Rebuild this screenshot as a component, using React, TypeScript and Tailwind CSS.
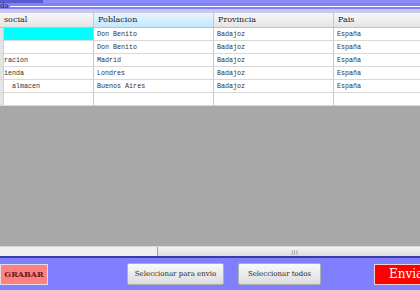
import React from "react";

const rows = [
  ["", "Don Benito", "Badajoz", "España"],
  ["", "Don Benito", "Badajoz", "España"],
  ["racion", "Madrid", "Badajoz", "España"],
  ["ienda", "Londres", "Badajoz", "España"],
  ["  almacen", "Buenos Aires", "Badajoz", "España"],
  ["", "", "", ""],
];

export default function App() {
  const mono = { fontFamily: '"Liberation Mono", "DejaVu Sans Mono", monospace' };
  const serif = { fontFamily: '"DejaVu Serif", "Liberation Serif", serif' };
  return (
    <div className="w-[420px] h-[290px] overflow-hidden bg-[#8080ff] flex flex-col">
      {/* titled border */}
      <div className="h-[13px] flex flex-col bg-[#8080ff]">
        <div className="flex h-[3px]">
          <div className="w-[43px] bg-[#5a5acf]" />
          <div className="flex-1 bg-[#8a8af8]" />
        </div>
        <div className="flex items-center h-[6px]">
          <span className="text-[7px] leading-none text-[#222]" style={serif}>da</span>
          <div className="flex-1 h-px bg-white ml-[1px]" />
        </div>
        <div className="h-[4px] bg-[#c8c8f0]" />
      </div>
      <div className="flex-1 flex flex-col bg-[#a8a8a8]">
        {/* table */}
        <div className="flex flex-col bg-white">
          <div className="flex h-[15px] border-b border-[#c0c0c0] bg-gradient-to-b from-[#f8f8f8] to-[#e4e4e4] text-[8px] text-[#222]" style={serif}>
            <div className="w-[94px] shrink-0 border-r border-[#c8c8c8] pl-[4px] flex items-center">social</div>
            <div className="w-[120px] shrink-0 border-r border-[#c8c8c8] pl-[4px] flex items-center bg-gradient-to-b from-[#e8f6fd] to-[#c4e8fb]">Poblacion</div>
            <div className="w-[120px] shrink-0 border-r border-[#c8c8c8] pl-[4px] flex items-center">Provincia</div>
            <div className="flex-1 pl-[4px] flex items-center">Pais</div>
          </div>
          {rows.map((r, i) => (
            <div key={i} className="flex h-[13px] border-b border-[#d8d8d8] text-[6.7px] text-[#333]" style={mono}>
              <div className="w-[4px] shrink-0 bg-[#e4e4e4] border-r border-[#d0d0d0]" />
              <div className={`w-[90px] shrink-0 border-r border-[#c8c8c8] flex items-center whitespace-pre ${i === 0 ? "bg-[#00ffff]" : ""}`}>{r[0]}</div>
              <div className="w-[120px] shrink-0 border-r border-[#c8c8c8] pl-[3px] flex items-center">{r[1]}</div>
              <div className="w-[120px] shrink-0 border-r border-[#c8c8c8] pl-[3px] flex items-center">{r[2]}</div>
              <div className="flex-1 pl-[3px] flex items-center">{r[3]}</div>
            </div>
          ))}
        </div>
        <div className="flex-1" />
        {/* scrollbar */}
        <div className="h-[10px] flex bg-[#f0f0f0] border-t border-[#d8d8d8]">
          <div className="w-[157px] shrink-0" />
          <div className="flex-1 border-l border-[#a0a0a0] bg-gradient-to-b from-[#f4f4f4] to-[#dcdcdc] flex items-center justify-center">
            <span className="text-[6px] leading-none text-[#666] tracking-[-1px] pl-[10px]">|||</span>
          </div>
        </div>
      </div>
      <div className="h-[2px] bg-[#3c3ca8]" />
      {/* buttons */}
      <div className="h-[32px] flex items-center bg-[#8080ff]">
        <div className="shrink-0 w-[48px] h-[21px] bg-[#ff8080] border border-[#e0e0e0] flex items-center justify-center text-[8px] font-bold text-[#6b1a1a] whitespace-nowrap" style={serif}>GRABAR</div>
        <div className="shrink-0 ml-[79px] w-[97px] h-[22px] rounded-[2px] border border-[#b0b0b0] bg-gradient-to-b from-[#fafafa] to-[#dcdcdc] flex items-center justify-center text-[7px] text-[#222] whitespace-nowrap" style={serif}>Seleccionar para envio</div>
        <div className="shrink-0 ml-[14px] w-[83px] h-[22px] rounded-[2px] border border-[#b0b0b0] bg-gradient-to-b from-[#fafafa] to-[#dcdcdc] flex items-center justify-center text-[7px] text-[#222] whitespace-nowrap" style={serif}>Seleccionar todos</div>
        <div className="shrink-0 ml-[53px] w-[60px] h-[21px] bg-[#ff0000] border border-[#f0d0d0] flex items-center pl-[14px] text-[12px] text-white whitespace-nowrap overflow-hidden" style={serif}>Enviar</div>
      </div>
    </div>
  );
}
